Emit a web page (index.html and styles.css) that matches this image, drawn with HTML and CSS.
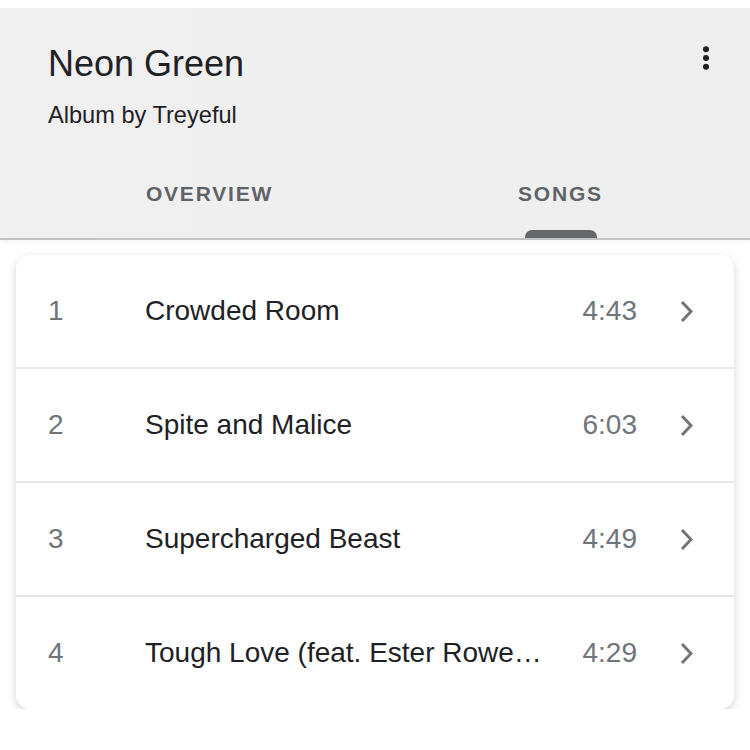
FILE: index.html
```html
<!DOCTYPE html>
<html lang="en">
<head>
    <meta charset="UTF-8">
    <meta name="viewport" content="width=device-width, initial-scale=1.0">
    <title>Neon Green - Songs</title>
    <link rel="stylesheet" href="styles.css">
</head>
<body>

    <div class="page">
        <div class="header">
            <div class="header-top">
                <div class="album">
                    <div class="album-title">Neon Green</div>
                    <div class="album-sub">Album by Treyeful</div>
                </div>
                <button class="menu" aria-label="More options">
                    <svg width="24" height="24" viewBox="0 0 24 24">
                        <circle cx="12" cy="3.2" r="3" fill="#202124"/>
                        <circle cx="12" cy="12" r="3" fill="#202124"/>
                        <circle cx="12" cy="20.8" r="3" fill="#202124"/>
                    </svg>
                </button>
            </div>

            <div class="tabs">
                <div class="tab">
                    <div class="tab-label">Overview</div>
                </div>
                <div class="tab active">
                    <div class="tab-label">Songs</div>
                    <div class="tab-indicator"></div>
                </div>
            </div>
        </div>

        <div class="card">
            <div class="song">
                <div class="song-num">1</div>
                <div class="song-title">Crowded Room</div>
                <div class="song-time">4:43</div>
                <svg class="chevron" width="13" height="23" viewBox="0 0 13 23">
                    <polyline points="2,2 11,11.5 2,21" fill="none" stroke="#70757a" stroke-width="3"/>
                </svg>
            </div>
            <div class="song">
                <div class="song-num">2</div>
                <div class="song-title">Spite and Malice</div>
                <div class="song-time">6:03</div>
                <svg class="chevron" width="13" height="23" viewBox="0 0 13 23">
                    <polyline points="2,2 11,11.5 2,21" fill="none" stroke="#70757a" stroke-width="3"/>
                </svg>
            </div>
            <div class="song">
                <div class="song-num">3</div>
                <div class="song-title">Supercharged Beast</div>
                <div class="song-time">4:49</div>
                <svg class="chevron" width="13" height="23" viewBox="0 0 13 23">
                    <polyline points="2,2 11,11.5 2,21" fill="none" stroke="#70757a" stroke-width="3"/>
                </svg>
            </div>
            <div class="song">
                <div class="song-num">4</div>
                <div class="song-title">Tough Love (feat. Ester Rowe…</div>
                <div class="song-time">4:29</div>
                <svg class="chevron" width="13" height="23" viewBox="0 0 13 23">
                    <polyline points="2,2 11,11.5 2,21" fill="none" stroke="#70757a" stroke-width="3"/>
                </svg>
            </div>
        </div>
    </div>

</body>
</html>
```

FILE: styles.css
```css
body {
    margin: 0;
    background: #fff;
    font-family: 'Liberation Sans', Arial, Helvetica, sans-serif;
    color: #202124;
}

.page {
    padding-top: 8px;
}

.header {
    background: linear-gradient(90deg, #f0f0f1 0%, #efeff0 50%, #eeeeef 100%);
    border-bottom: 2px solid #c2c2c4;
    box-shadow: 0 2px 4px rgba(0, 0, 0, 0.05);
}

.header-top {
    display: flex;
    justify-content: space-between;
    align-items: flex-start;
    padding: 36px 32px 0 48px;
}

.album-title {
    font-size: 36px;
    line-height: 40px;
}

.album-sub {
    font-size: 23.6px;
    line-height: 28px;
    margin-top: 17px;
}

.menu {
    border: none;
    background: none;
    padding: 0;
    margin-top: 2px;
    width: 24px;
    height: 24px;
    cursor: pointer;
}

.menu svg {
    display: block;
}

.tabs {
    display: flex;
    padding: 0 14px 0 34px;
    margin-top: 53px;
}

.tab {
    flex: 1;
    display: flex;
    flex-direction: column;
    align-items: center;
}

.tab-label {
    font-size: 21px;
    line-height: 24px;
    font-weight: bold;
    letter-spacing: 1.8px;
    text-transform: uppercase;
    color: #5f6368;
}

.tab-indicator {
    width: 72px;
    height: 8px;
    margin-top: 24px;
    border-radius: 7px 7px 0 0;
    background: #666769;
}

.card {
    margin: 15px 16px 0;
    background: #fff;
    border-radius: 14px;
    box-shadow: 0 3px 9px rgba(0, 0, 0, 0.18);
    overflow: hidden;
}

.song {
    display: flex;
    align-items: center;
    height: 112px;
    padding: 0 41px 0 32px;
    font-size: 28px;
}

.song + .song {
    border-top: 2px solid #e6e6e7;
}

.song-num {
    width: 97px;
    flex-shrink: 0;
    color: #70757a;
}

.song-title {
    flex: 1;
    min-width: 0;
    white-space: nowrap;
    overflow: hidden;
    text-overflow: ellipsis;
    color: #202124;
}

.song-time {
    margin-left: 32px;
    color: #70757a;
}

.chevron {
    display: block;
    margin-left: 43px;
    flex-shrink: 0;
}
```
